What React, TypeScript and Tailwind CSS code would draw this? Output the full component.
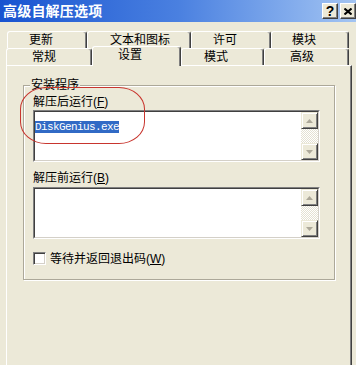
import clsx from "clsx";
import type { ReactNode } from "react";

const ui = "font-['Liberation_Sans','Noto_Sans_CJK_SC',sans-serif]";

function Tab({ label, className, selected }: { label: string; className: string; selected?: boolean }) {
  return (
    <div
      className={clsx(
        "flex items-center shrink-0 border-t border-l border-white border-r border-r-[#404040] rounded-t-[3px] bg-[#ECE9D8] shadow-[inset_-1px_0_0_#808080] text-[12px] leading-[14px] text-black",
        selected ? "relative z-10 h-[20px] -mb-px pb-[3px]" : "h-[17px]",
        className
      )}
    >
      {label}
    </div>
  );
}

function Arrow({ down }: { down?: boolean }) {
  return (
    <svg width="7" height="4" viewBox="0 0 7 4" className={down ? "rotate-180" : ""}>
      <polygon points="3.5,0 7,4 0,4" fill="#ACA899" />
    </svg>
  );
}

function ScrollButton({ down }: { down?: boolean }) {
  return (
    <div className="w-[17px] h-[17px] flex items-center justify-center bg-[#ECE9D8] border border-t-[#ECE9D8] border-l-[#ECE9D8] border-b-[#404040] border-r-[#404040] shadow-[inset_1px_1px_0_#fff,inset_-1px_-1px_0_#808080]">
      <Arrow down={down} />
    </div>
  );
}

function TextBox({ children }: { children?: ReactNode }) {
  return (
    <div className="w-[287px] h-[52px] border border-t-[#808080] border-l-[#808080] border-b-white border-r-white">
      <div className="flex h-full bg-white border border-t-[#404040] border-l-[#404040] border-b-[#D4D0C8] border-r-[#D4D0C8]">
        <div className="flex-1 pt-px">{children}</div>
        <div className="flex flex-col w-[17px]">
          <ScrollButton />
          <div className="flex-1 bg-[repeating-conic-gradient(#ffffff_0_25%,#e4e1d2_0_50%)] bg-[length:2px_2px]" />
          <ScrollButton down />
        </div>
      </div>
    </div>
  );
}

function CaptionButton({ children }: { children: ReactNode }) {
  return (
    <div className="w-[16px] h-[16px] flex items-center justify-center bg-[#ECE9D8] border border-t-white border-l-white border-b-[#404040] border-r-[#404040] shadow-[inset_-1px_-1px_0_#808080]">
      {children}
    </div>
  );
}

export default function App() {
  return (
    <div className={clsx("relative w-[356px] h-[365px] overflow-hidden bg-[#ECE9D8] flex flex-col text-black", ui)}>
      <div className="h-[22px] shrink-0 flex items-center pl-[3px] bg-gradient-to-r from-[#1853d0] via-[#4a80e0] to-[#a3c4f2]">
        <span className="text-white font-bold text-[14px] tracking-[0.2px] leading-[16px]">高级自解压选项</span>
        <div className="ml-auto flex gap-[2px] self-start mt-[3px]">
          <CaptionButton>
            <span className="font-bold text-[14px] leading-[14px] font-['Liberation_Sans',sans-serif]">?</span>
          </CaptionButton>
          <CaptionButton>
            <svg width="8" height="7" viewBox="0 0 8 7">
              <path d="M0.5 0.5 L7.5 6.5 M7.5 0.5 L0.5 6.5" stroke="#000" strokeWidth="2" />
            </svg>
          </CaptionButton>
        </div>
      </div>

      <div className="pt-[9px] shrink-0">
        <div className="flex h-[17px] ml-[7px]">
          <Tab label="更新" className="w-[80px] pl-[21px]" />
          <Tab label="文本和图标" className="w-[104px] pl-[22px]" />
          <Tab label="许可" className="w-[80px] pl-[21px]" />
          <Tab label="模块" className="w-[78px] pl-[20px]" />
        </div>
        <div className="flex items-end h-[17px] ml-[6px]">
          <Tab label="常规" className="w-[86px] pl-[25px]" />
          <Tab label="设置" className="w-[89px] pl-[25px]" selected />
          <Tab label="模式" className="w-[83px] pl-[22px]" />
          <Tab label="高级" className="w-[85px] pl-[25px]" />
        </div>
      </div>

      <div className="flex-1 ml-[6px] w-[346px] border-t border-l border-white border-r border-r-[#404040] shadow-[inset_-1px_0_0_#808080] pt-[12px] pl-[16px]">
        <fieldset className="m-0 p-0 min-w-0 w-[312px] h-[202px] border border-[#ACA899] shadow-[inset_1px_1px_0_#fff,1px_1px_0_#fff]">
          <legend className="ml-[6px] px-[1px] bg-[#ECE9D8] text-[12px] leading-[14px]">安装程序</legend>
          <div className="flex flex-col pl-[9px]">
            <div className="mt-[3px] text-[12px] leading-[14px]">
              解压后运行(<span className="underline">F</span>)
            </div>
            <div className="mt-px">
              <TextBox>
                <span className="bg-[#316AC5] text-white font-['Liberation_Mono',monospace] text-[11px] tracking-[-0.6px] leading-[12px]">
                  DiskGenius.exe
                </span>
              </TextBox>
            </div>
            <div className="mt-[9px] text-[12px] leading-[14px]">
              解压前运行(<span className="underline">B</span>)
            </div>
            <div className="mt-[2px]">
              <TextBox />
            </div>
            <div className="mt-[13px] flex items-center h-[13px]">
              <div className="w-[13px] h-[13px] bg-white border border-t-[#808080] border-l-[#808080] border-b-white border-r-white shadow-[inset_1px_1px_0_#404040,inset_-1px_-1px_0_#D4D0C8]" />
              <span className="ml-[4px] text-[12px] leading-[14px]">
                等待并返回退出码(<span className="underline">W</span>)
              </span>
            </div>
          </div>
        </fieldset>
      </div>

      <div className="absolute left-[20px] top-[87px] w-[125px] h-[57px] border border-[#C8352E] rounded-[26px_/_22px] pointer-events-none" />
    </div>
  );
}
